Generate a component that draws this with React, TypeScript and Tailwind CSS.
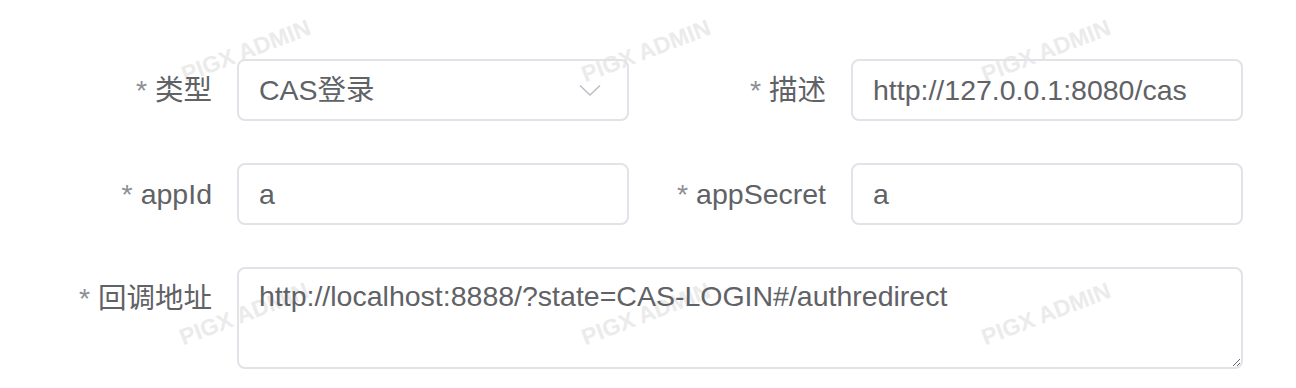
import React from 'react';

const FONT = "font-['Liberation_Sans','Noto_Sans_CJK_SC',sans-serif]";

function Label({ text, width }: { text: string; width: string }) {
  return (
    <label className={`${width} shrink-0 pr-[25px] text-right text-[28.5px] leading-[62px] text-[#606266]`}>
      <span className="mr-[8px] text-[#8c8f96]">*</span>
      {text}
    </label>
  );
}

function Input({ value }: { value: string }) {
  return (
    <input
      readOnly
      value={value}
      className="h-[62px] w-[392px] rounded-[8px] border-2 border-[#e1e3e8] bg-transparent px-[20px] text-[28.5px] text-[#606266] outline-none"
    />
  );
}

const marks = [
  { x: 'left-[246px]', y: 'top-[51px]' },
  { x: 'left-[646px]', y: 'top-[51px]' },
  { x: 'left-[1046px]', y: 'top-[51px]' },
  { x: 'left-[244px]', y: 'top-[314px]' },
  { x: 'left-[646px]', y: 'top-[314px]' },
  { x: 'left-[1046px]', y: 'top-[314px]' },
];

export default function App() {
  return (
    <div className={`relative h-[388px] w-[1296px] overflow-hidden bg-white ${FONT}`}>
      {/* watermark, behind the form */}
      {marks.map((m, i) => (
        <div
          key={i}
          className={`pointer-events-none absolute ${m.x} ${m.y} -translate-x-1/2 -translate-y-1/2 -rotate-[21deg] whitespace-nowrap text-[23px] font-bold text-[#ebebeb]`}
        >
          PIGX ADMIN
        </div>
      ))}

      <div className="relative flex flex-col gap-[42px] pt-[59px]">
        {/* row 1 */}
        <div className="flex items-center">
          <Label text="类型" width="w-[237px]" />
          <div className="flex h-[62px] w-[392px] items-center justify-between rounded-[8px] border-2 border-[#e1e3e8] pl-[20px] pr-[26px] text-[28.5px] text-[#606266]">
            <span>CAS登录</span>
            <svg width="22" height="13" viewBox="0 0 22 13" fill="none">
              <path d="M1 1.5 L11 11 L21 1.5" stroke="#b8bcc4" strokeWidth="1.4" />
            </svg>
          </div>
          <Label text="描述" width="w-[222px]" />
          <Input value="http://127.0.0.1:8080/cas" />
        </div>

        {/* row 2 */}
        <div className="flex items-center">
          <Label text="appId" width="w-[237px]" />
          <Input value="a" />
          <Label text="appSecret" width="w-[222px]" />
          <Input value="a" />
        </div>

        {/* row 3 */}
        <div className="flex items-start">
          <Label text="回调地址" width="w-[237px]" />
          <textarea
            readOnly
            value="http://localhost:8888/?state=CAS-LOGIN#/authredirect"
            className="h-[102px] w-[1006px] rounded-[8px] border-2 border-[#e1e3e8] bg-transparent px-[20px] pt-[6px] text-[28.5px] leading-[42px] text-[#606266] outline-none"
          />
        </div>
      </div>
    </div>
  );
}
